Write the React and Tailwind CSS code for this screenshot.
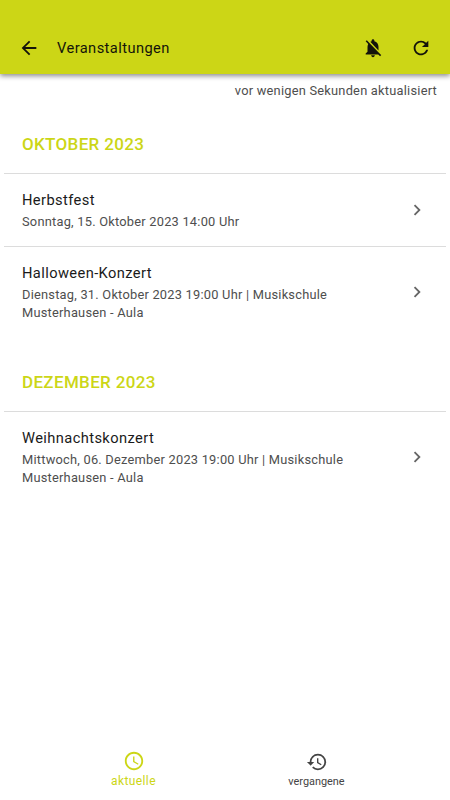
import React from "react";
import {
    MdArrowBack,
    MdNotificationsOff,
    MdRefresh,
    MdChevronRight,
    MdAccessTime,
    MdHistory,
} from "react-icons/md";

const months = [
    {
        name: "OKTOBER 2023",
        events: [
            {
                title: "Herbstfest",
                lines: ["Sonntag, 15. Oktober 2023 14:00 Uhr"],
            },
            {
                title: "Halloween-Konzert",
                lines: [
                    "Dienstag, 31. Oktober 2023 19:00 Uhr | Musikschule",
                    "Musterhausen - Aula",
                ],
            },
        ],
    },
    {
        name: "DEZEMBER 2023",
        events: [
            {
                title: "Weihnachtskonzert",
                lines: [
                    "Mittwoch, 06. Dezember 2023 19:00 Uhr | Musikschule",
                    "Musterhausen - Aula",
                ],
            },
        ],
    },
];

function Header() {
    return (
        <header className="flex h-[74px] shrink-0 items-end bg-[#ccd616] px-[18px] pb-[15px] text-[#14140a] shadow-[0_2px_5px_rgba(0,0,0,0.45)]">
            <button className="mr-[17px]">
                <MdArrowBack size={22} />
            </button>
            <h1 className="flex-1 text-[14.66px] leading-[22px] tracking-[0.42px]">
                Veranstaltungen
            </h1>
            <button className="mr-[26px]">
                <MdNotificationsOff size={22} />
            </button>
            <button>
                <MdRefresh size={22} />
            </button>
        </header>
    );
}

function EventRow({ event }) {
    return (
        <li className="flex items-center border-t border-[#dcdcdc] pt-[15px] pr-[18px] pb-[14.2px] pl-[18px]">
            <div className="flex-1">
                <h3 className="mb-[2px] text-[14.66px] leading-[22px] tracking-[0.4px] text-[#1a1a1a]">
                    {event.title}
                </h3>
                {event.lines.map((line) => (
                    <p
                        key={line}
                        className="text-[12.83px] leading-[18.5px] tracking-[0.23px] whitespace-nowrap text-[#4e4e4e]"
                    >
                        {line}
                    </p>
                ))}
            </div>
            <MdChevronRight size={22} className="mb-px text-[#666666]" />
        </li>
    );
}

export default function App() {
    return (
        <div className="flex h-[800px] w-[450px] flex-col bg-white font-[Roboto,sans-serif]">
            <Header />
            <main className="flex-1 px-1">
                <p className="pt-2 pr-[9px] text-right text-[12.83px] leading-[17px] tracking-[0.23px] text-[#4e4e4e]">
                    vor wenigen Sekunden aktualisiert
                </p>
                {months.map((month) => (
                    <section key={month.name}>
                        <h2 className="flex h-[74px] items-center pt-[17px] pl-[18px] text-[17px] font-medium tracking-[0.33px] text-[#ccd616]">
                            {month.name}
                        </h2>
                        <ul>
                            {month.events.map((event) => (
                                <EventRow key={event.title} event={event} />
                            ))}
                        </ul>
                    </section>
                ))}
            </main>
            <nav className="flex h-[50px] shrink-0 px-[42px] text-[#444444]">
                <button className="flex flex-1 flex-col items-center text-[12px] leading-[18px] tracking-[0.4px] text-[#ccd616]">
                    <MdAccessTime size={22} />
                    aktuelle
                </button>
                <button className="flex flex-1 flex-col items-center pt-px text-[10.9px] leading-[17px]">
                    <MdHistory size={22} />
                    vergangene
                </button>
            </nav>
        </div>
    );
}
